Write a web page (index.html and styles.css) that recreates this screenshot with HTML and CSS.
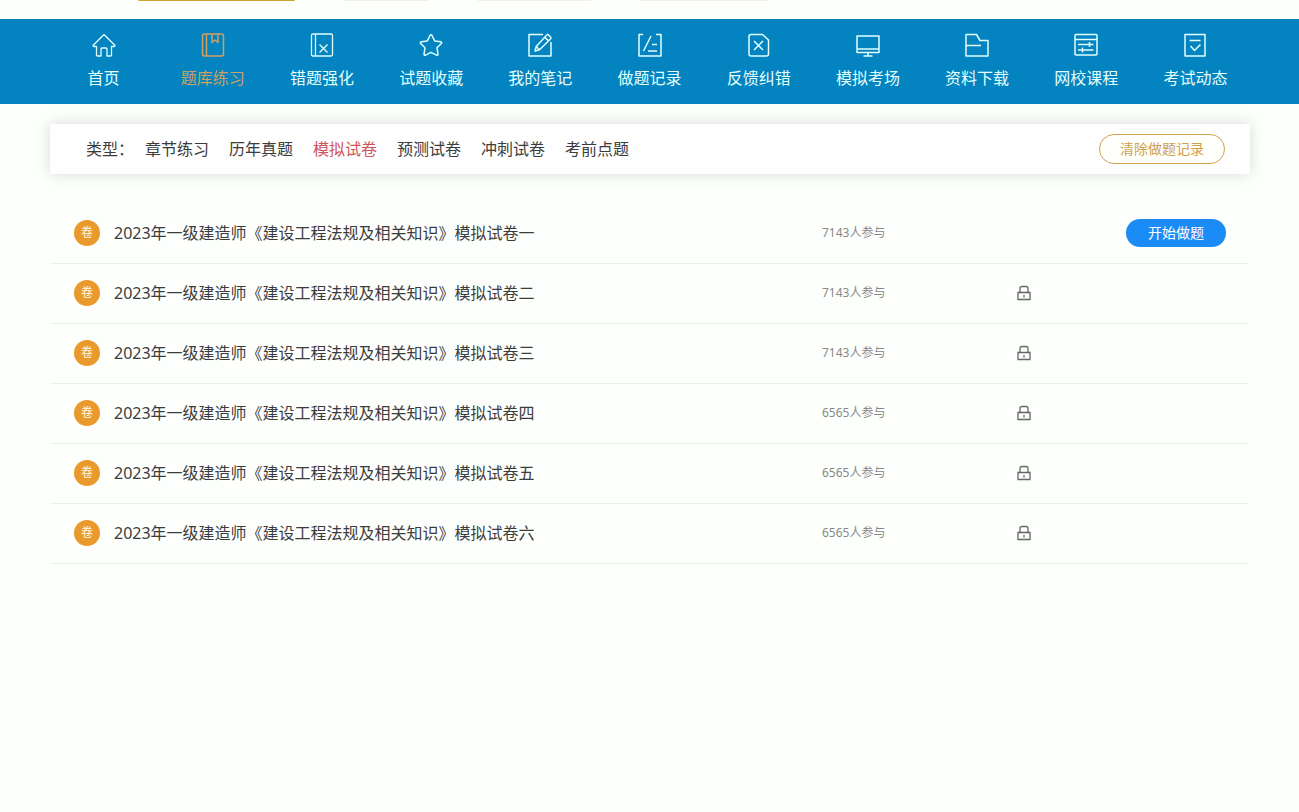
FILE: index.html
```html
<!DOCTYPE html>
<html lang="zh-CN">
<head>
<meta charset="utf-8">
<meta name="viewport" content="width=device-width, initial-scale=1">
<title>模拟试卷</title>
<link rel="stylesheet" href="styles.css">
</head>
<body>
<svg class="sprite" aria-hidden="true">
  <symbol id="lock" viewBox="0 0 14 16"><path d="M1 7.500h12v7H1zM3 7.500V3.500Q3 1.500 5 1.500h4q2 0 2 2v4M7 10v2.500"/></symbol>
</svg>
<div class="tabs">
  <span class="tab tab-active"></span>
  <span class="tab tab-short"></span>
  <span class="tab tab-medium"></span>
  <span class="tab tab-long"></span>
</div>
<nav class="nav">
  <div class="nav-inner">
    <a class="nav-item" href="#"><svg class="icon" viewBox="0 0 24 24"><path d="M1 12.500 12 1.500l11 11q0 1-1 1h-2.500V22q0 1-1 1H15v-7q0-1-1-1h-4q-1 0-1 1v7H5.500q-1 0-1-1v-8.500H2q-1 0-1-1z"/></svg>首页</a>
    <a class="nav-item nav-active" href="#"><svg class="icon icon-bold" viewBox="0 0 24 24"><path d="M3.500 1h17q2 0 2 2v18q0 2-2 2h-17q-2 0-2-2V3q0-2 2-2zM5.500 1v22M11 1v8.500l3-2.500 3 2.500V1"/></svg>题库练习</a>
    <a class="nav-item" href="#"><svg class="icon" viewBox="0 0 24 24"><path d="M3 1h18q1.500 0 1.500 1.500v19q0 1.500-1.500 1.500H3q-1.500 0-1.500-1.500v-19Q1.500 1 3 1zM5.500 1v22M9.500 11.500l8 8M17.500 11.500l-8 8"/></svg>错题强化</a>
    <a class="nav-item" href="#"><svg class="icon icon-bold" viewBox="0 0 24 24"><path d="M11 2.500q1-1.500 2 0l2.700 5.400 6 .9q1.600.4.600 1.700l-4.300 4.300 1 6.200q0 1.700-1.500 1.100L12 19.300l-5.500 2.800q-1.500.6-1.500-1.100l1-6.200-4.300-4.300q-1-1.300.6-1.700l6-.9z"/></svg>试题收藏</a>
    <a class="nav-item" href="#"><svg class="icon icon-bold" viewBox="0 0 24 24"><path d="M15 1.500H1V23h22V9M20 1.500l2.500 2.500q.8 1 0 2L11.500 16.800 7 18l1.200-4.500L19 1.800q.5-.7 1-.3zM16.800 4.200l3.200 3.200M8.200 13.500l3.300 3.300"/></svg>我的笔记</a>
    <a class="nav-item" href="#"><svg class="icon icon-bold" viewBox="0 0 24 24"><path d="M5 1.500H1V23h22V1.500h-5M13 3 5.500 18M14 11.500h5M10 18h9"/></svg>做题记录</a>
    <a class="nav-item" href="#"><svg class="icon icon-bold" viewBox="0 0 24 24"><path d="M4 1.500h11.500L21.500 7v14q0 2-2 2H4q-2 0-2-2V3.500q0-2 2-2zM7 8l9 9M16 8l-9 9"/></svg>反馈纠错</a>
    <a class="nav-item" href="#"><svg class="icon icon-bold" viewBox="0 0 24 24"><path d="M1 3h22v16.500H1zM1 16h22M12 19.500V23M7.500 23h9"/></svg>模拟考场</a>
    <a class="nav-item" href="#"><svg class="icon icon-bold" viewBox="0 0 24 24"><path d="M1 1.500h10.500L15 7.500h8V23H1zM1 12.500h15"/></svg>资料下载</a>
    <a class="nav-item" href="#"><svg class="icon icon-bold" viewBox="0 0 24 24"><path d="M2 1.500h20q1 0 1 1V21q0 1-1 1H2q-1 0-1-1V2.500q0-1 1-1zM1 6.500h22M4 11.500h15.500M15.500 9v5M4 17h15.500M8.500 14.500v5"/></svg>网校课程</a>
    <a class="nav-item" href="#"><svg class="icon icon-bold" viewBox="0 0 24 24"><path d="M2 1.500h20V23H2zM6.500 7.500h11M7.500 13l4 4.500 6-6"/></svg>考试动态</a>
  </div>
</nav>
<main class="page">
  <section class="filter">
    <span class="filter-label">类型：</span>
    <div class="filter-links">
      <a class="filter-link" href="#">章节练习</a>
      <a class="filter-link" href="#">历年真题</a>
      <a class="filter-link filter-active" href="#">模拟试卷</a>
      <a class="filter-link" href="#">预测试卷</a>
      <a class="filter-link" href="#">冲刺试卷</a>
      <a class="filter-link" href="#">考前点题</a>
    </div>
    <button class="clear" type="button">清除做题记录</button>
  </section>
  <ul class="papers">
    <li class="paper"><div class="paper-name"><span class="badge">卷</span><span>2023年一级建造师《建设工程法规及相关知识》模拟试卷一</span></div><span class="count">7143人参与</span><button class="start" type="button">开始做题</button></li>
    <li class="paper"><div class="paper-name"><span class="badge">卷</span><span>2023年一级建造师《建设工程法规及相关知识》模拟试卷二</span></div><span class="count">7143人参与</span><svg class="lock"><use href="#lock"/></svg></li>
    <li class="paper"><div class="paper-name"><span class="badge">卷</span><span>2023年一级建造师《建设工程法规及相关知识》模拟试卷三</span></div><span class="count">7143人参与</span><svg class="lock"><use href="#lock"/></svg></li>
    <li class="paper"><div class="paper-name"><span class="badge">卷</span><span>2023年一级建造师《建设工程法规及相关知识》模拟试卷四</span></div><span class="count">6565人参与</span><svg class="lock"><use href="#lock"/></svg></li>
    <li class="paper"><div class="paper-name"><span class="badge">卷</span><span>2023年一级建造师《建设工程法规及相关知识》模拟试卷五</span></div><span class="count">6565人参与</span><svg class="lock"><use href="#lock"/></svg></li>
    <li class="paper"><div class="paper-name"><span class="badge">卷</span><span>2023年一级建造师《建设工程法规及相关知识》模拟试卷六</span></div><span class="count">6565人参与</span><svg class="lock"><use href="#lock"/></svg></li>
  </ul>
</main>
</body>
</html>
```
FILE: styles.css
```css
* {
  box-sizing: border-box;
}

body {
  margin: 0;
  background: #fdfffd;
  color: #3c3c3c;
  font-family: "Noto Sans", "Noto Sans CJK SC", sans-serif;
  font-size: 16px;
  line-height: 24px;
}

a {
  color: inherit;
  text-decoration: none;
}

button {
  padding: 0;
  border: 0;
  font-family: inherit;
  font-size: 14px;
  line-height: 20px;
  cursor: pointer;
}

.sprite {
  display: none;
}

.tabs {
  display: flex;
  max-width: 1201px;
  height: 19px;
  margin: 0 auto;
  padding-left: 89px;
}

.tab {
  height: 1px;
  margin-right: 49px;
  background: #f1eeee;
}

.tab-active {
  width: 157px;
  border-radius: 0 0 4px 4px;
  background: #cda52e;
}

.tab-short {
  width: 85px;
}

.tab-medium {
  width: 113px;
}

.tab-long {
  width: 128px;
}

.nav {
  background: #0383c0;
  color: #e2fffc;
}

.nav-inner {
  display: flex;
  max-width: 1201px;
  margin: 0 auto;
}

.nav-item {
  display: flex;
  flex: 1;
  flex-direction: column;
  align-items: center;
  gap: 9px;
  padding: 14px 0;
}

.nav-active {
  color: #cfa060;
}

.icon {
  width: 24px;
  height: 24px;
  fill: none;
  stroke: currentColor;
  stroke-width: 1.3;
  stroke-linejoin: round;
}

.icon-bold {
  stroke-width: 1.5;
}

.page {
  max-width: 1201px;
  margin: 20px auto 0;
  padding-left: 1px;
}

.filter {
  display: flex;
  align-items: center;
  height: 50px;
  padding: 0 25px 0 36px;
  background: #fefefe;
  box-shadow: 0 0 14px rgba(0, 0, 0, 0.15);
}

.filter-label {
  width: 59px;
}

.filter-links {
  display: flex;
  flex: 1;
  gap: 20px;
}

.filter-active {
  color: #cf5359;
}

.clear {
  width: 126px;
  height: 30px;
  border: 1px solid #d0a050;
  border-radius: 15px;
  background: #fffffb;
  color: #d0a050;
}

.papers {
  margin: 30px 2px 0 0;
  padding: 0;
  list-style: none;
}

.paper {
  display: grid;
  grid-template-columns: 1fr 195px 209px;
  align-items: center;
  height: 60px;
  padding: 0 22px 1px 24px;
  border-bottom: 1px solid #eee;
}

.paper-name {
  display: flex;
  align-items: center;
  gap: 14px;
}

.badge {
  width: 26px;
  height: 26px;
  border-radius: 50%;
  background: #ea9a2c;
  color: #fffbe8;
  font-size: 12px;
  line-height: 26px;
  text-align: center;
}

.count {
  color: #888;
  font-size: 12px;
}

.start {
  justify-self: end;
  width: 100px;
  height: 28px;
  border-radius: 14px;
  background: #1b8bf5;
  color: #fff;
}

.lock {
  width: 14px;
  height: 16px;
  fill: none;
  stroke: #666;
  stroke-width: 1.3;
}
```
